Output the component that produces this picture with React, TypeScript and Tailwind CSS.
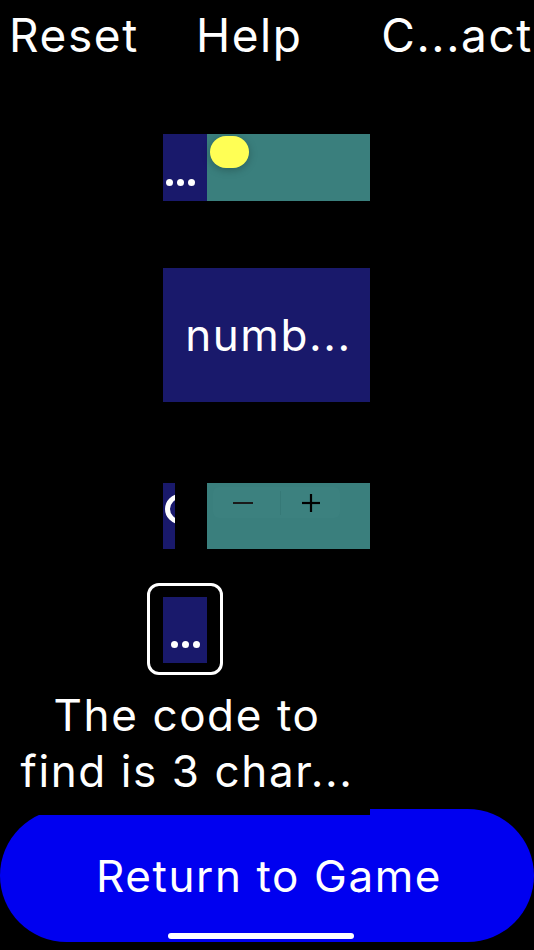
import React from 'react';

function Dots() {
  return (
    <div className="flex gap-[4px]">
      <span className="h-[7px] w-[7px] rounded-full bg-white" />
      <span className="h-[7px] w-[7px] rounded-full bg-white" />
      <span className="h-[7px] w-[7px] rounded-full bg-white" />
    </div>
  );
}

export default function App() {
  return (
    <div className="relative h-[950px] w-[534px] overflow-hidden bg-black font-['Inter',sans-serif] tracking-[0.1em] text-white">
      {/* Top menu */}
      <div className="flex items-start pt-[10px] text-[46px] leading-[50px]">
        <span className="ml-[9px]">Reset</span>
        <span className="ml-[57px]">Help</span>
        <span className="ml-auto mr-[1px]">C...act</span>
      </div>

      <div className="ml-[163px] flex flex-col">
        {/* Toggle row */}
        <div className="mt-[74px] flex h-[67px] w-[207px]">
          <div className="flex w-[44px] flex-col justify-end bg-[#19196b] pb-[15px] pl-[3px]">
            <Dots />
          </div>
          <div className="flex-1 bg-[#3a7f7d] pl-[3px] pt-[2px]">
            <div className="h-[32px] w-[39px] rounded-full bg-[#ffff55] shadow-[0_2px_8px_rgba(0,0,0,0.25)]" />
          </div>
        </div>

        {/* Number box */}
        <div className="mt-[67px] flex h-[134px] w-[207px] items-center justify-center bg-[#19196b] pl-[4px] text-[44px]">
          numb...
        </div>

        {/* Stepper row */}
        <div className="mt-[81px] flex h-[66px]">
          <div className="relative h-full w-[12px] overflow-hidden bg-[#19196b]">
            <div className="absolute left-[2px] top-[11px] h-[30px] w-[30px] rounded-full border-[5px] border-white" />
          </div>
          <div className="ml-[32px] w-[163px] bg-[#3a7f7d] pl-[6px] pt-[4px]">
            <div className="flex h-[31px] w-[127px] items-center rounded-[6px] bg-[#3c817f]">
              <span className="flex flex-1 justify-center pr-[8px]">
                <svg width="20" height="4" viewBox="0 0 20 4">
                  <line x1="0" y1="2" x2="20" y2="2" stroke="#1a1a1a" strokeWidth="2" />
                </svg>
              </span>
              <span className="h-[24px] w-px bg-[#367977]" />
              <span className="flex flex-1 justify-center">
                <svg width="18" height="18" viewBox="0 0 18 18">
                  <line x1="0" y1="9" x2="18" y2="9" stroke="#000" strokeWidth="2.2" />
                  <line x1="9" y1="0" x2="9" y2="18" stroke="#000" strokeWidth="2.2" />
                </svg>
              </span>
            </div>
          </div>
        </div>

        {/* Selected item */}
        <div className="-ml-[16px] mt-[34px] h-[92px] w-[76px] rounded-[12px] border-[3px] border-white pl-[13px] pt-[11px]">
          <div className="flex h-[66px] w-[44px] flex-col items-center justify-end bg-[#19196b] pb-[15px]">
            <Dots />
          </div>
        </div>
      </div>

      {/* Hint text */}
      <div className="relative z-10 w-[370px] bg-black pb-[16px] pl-[4px] pt-[12px] text-center text-[44px] leading-[56px]">
        <div>The code to</div>
        <div>find is 3 char...</div>
      </div>

      {/* Return button */}
      <div className="relative -mt-[6px] flex h-[133px] w-[534px] items-center justify-center rounded-full bg-[#0000f0] pl-[4px] text-[44px]">
        Return to Game
        <div className="absolute bottom-[3px] left-[168px] h-[6px] w-[186px] rounded-full bg-white" />
      </div>
    </div>
  );
}
